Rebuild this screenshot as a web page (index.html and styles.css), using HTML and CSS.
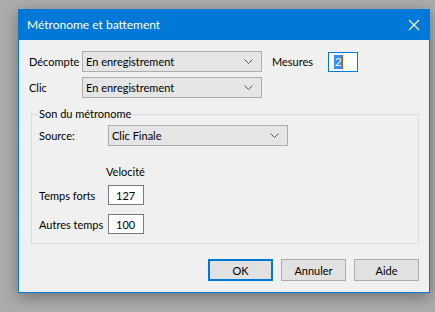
FILE: index.html
```html
<!DOCTYPE html>
<html lang="fr">
<head>
<meta charset="utf-8">
<title>Métronome et battement</title>
<link rel="stylesheet" href="styles.css">
</head>
<body>
<div class="dialog">
  <div class="titlebar">
    <span class="title">Métronome et battement</span>
    <svg class="close" width="12" height="12" viewBox="0 0 12 12"><path d="M1 1 L11 11 M11 1 L1 11" stroke="#fff" stroke-width="1.1" fill="none"/></svg>
  </div>
  <div class="content">
    <div class="top-grid">
      <span class="lbl">Décompte</span>
      <div class="combo"><span>En enregistrement</span><svg class="chev" width="9" height="5" viewBox="0 0 9 5"><path d="M0.5 0.5 L4.5 4.5 L8.5 0.5" stroke="#555" fill="none"/></svg></div>
      <span class="lbl mes">Mesures</span>
      <div class="edit focus"><span class="sel">2</span><span class="caret"></span></div>
      <span class="lbl">Clic</span>
      <div class="combo"><span>En enregistrement</span><svg class="chev" width="9" height="5" viewBox="0 0 9 5"><path d="M0.5 0.5 L4.5 4.5 L8.5 0.5" stroke="#555" fill="none"/></svg></div>
    </div>
    <fieldset class="group">
      <legend>Son du métronome</legend>
      <div class="src-row">
        <span class="lbl src">Source:</span>
        <div class="combo wide"><span>Clic Finale</span><svg class="chev" width="9" height="5" viewBox="0 0 9 5"><path d="M0.5 0.5 L4.5 4.5 L8.5 0.5" stroke="#555" fill="none"/></svg></div>
      </div>
      <div class="vel">Velocité</div>
      <div class="vrow"><span class="lbl src">Temps forts</span><div class="edit num">127</div></div>
      <div class="vrow"><span class="lbl src">Autres temps</span><div class="edit num">100</div></div>
    </fieldset>
    <div class="buttons">
      <button class="btn default">OK</button>
      <button class="btn">Annuler</button>
      <button class="btn">Aide</button>
    </div>
  </div>
</div>
</body>
</html>
```
FILE: styles.css
```css
html, body {
  margin: 0;
  padding: 0;
}
body {
  background: #acacac;
  width: 435px;
  height: 312px;
  overflow: hidden;
  font-family: "Lato", "Noto Sans", sans-serif;
  font-size: 11px;
  color: #000;
}
.dialog {
  margin: 9px 0 0 18px;
  width: 412px;
  height: 284px;
  box-sizing: border-box;
  border: 1px solid #0078d7;
  border-top: none;
  background: #f0f0f0;
  box-shadow: 0 4px 14px rgba(0,0,0,0.35);
  display: flex;
  flex-direction: column;
}
.titlebar {
  height: 31px;
  background: #0078d7;
  margin: 0 -1px;
  display: flex;
  align-items: center;
  justify-content: space-between;
  padding: 0 10px 0 9px;
  color: #fff;
  flex: none;
}
.title {
  font-size: 12px;
}
.close {
  display: block;
}
.content {
  flex: 1;
  display: flex;
  flex-direction: column;
  padding: 11px 10px 11px 10px;
}
.top-grid {
  display: grid;
  grid-template-columns: 53px 180px 66px 30px;
  row-gap: 5px;
  align-items: center;
}
.mes {
  margin-left: 10px;
}
.lbl {
  white-space: nowrap;
}
.combo {
  height: 21px;
  box-sizing: border-box;
  border: 1px solid #adadad;
  background: #e5e5e5;
  display: flex;
  align-items: center;
  justify-content: space-between;
  padding: 0 8px 0 3px;
}
.chev {
  display: block;
}
.edit {
  height: 20px;
  box-sizing: border-box;
  border: 1px solid #7a7a7a;
  background: #fff;
  display: flex;
  align-items: center;
  padding: 0 3px;
}
.edit.focus {
  border-color: #0078d7;
  padding-left: 5px;
}
.sel {
  background: #3390ff;
  color: #fff;
  line-height: 14px;
  padding: 0 1px;
}
.caret {
  width: 1px;
  height: 14px;
  background: #c45a00;
}
.group {
  margin: 8px 0 0 2px;
  padding: 3px 7px 9px 7px;
  border: 1px solid #dcdcdc;
  min-width: 0;
}
.group legend {
  padding: 0 1px;
  margin-left: -1px;
  line-height: 16px;
}
.src-row {
  display: flex;
  align-items: center;
}
.src {
  width: 69px;
  flex: none;
}
.combo.wide {
  width: 180px;
  height: 21px;
}
.vel {
  margin: 18px 0 0 67px;
  line-height: 16px;
}
.vrow {
  display: flex;
  align-items: center;
  margin-top: 5px;
}
.vrow + .vrow {
  margin-top: 9px;
}
.num {
  width: 36px;
  padding-left: 7px;
}
.buttons {
  margin-top: auto;
  display: flex;
  justify-content: flex-end;
  gap: 8px;
}
.btn {
  width: 65px;
  height: 22px;
  box-sizing: border-box;
  border: 1px solid #adadad;
  background: #e1e1e1;
  font-family: inherit;
  font-size: 11px;
  color: #000;
  padding: 0;
  margin: 0;
}
.btn.default {
  border: 2px solid #0078d7;
}
```
